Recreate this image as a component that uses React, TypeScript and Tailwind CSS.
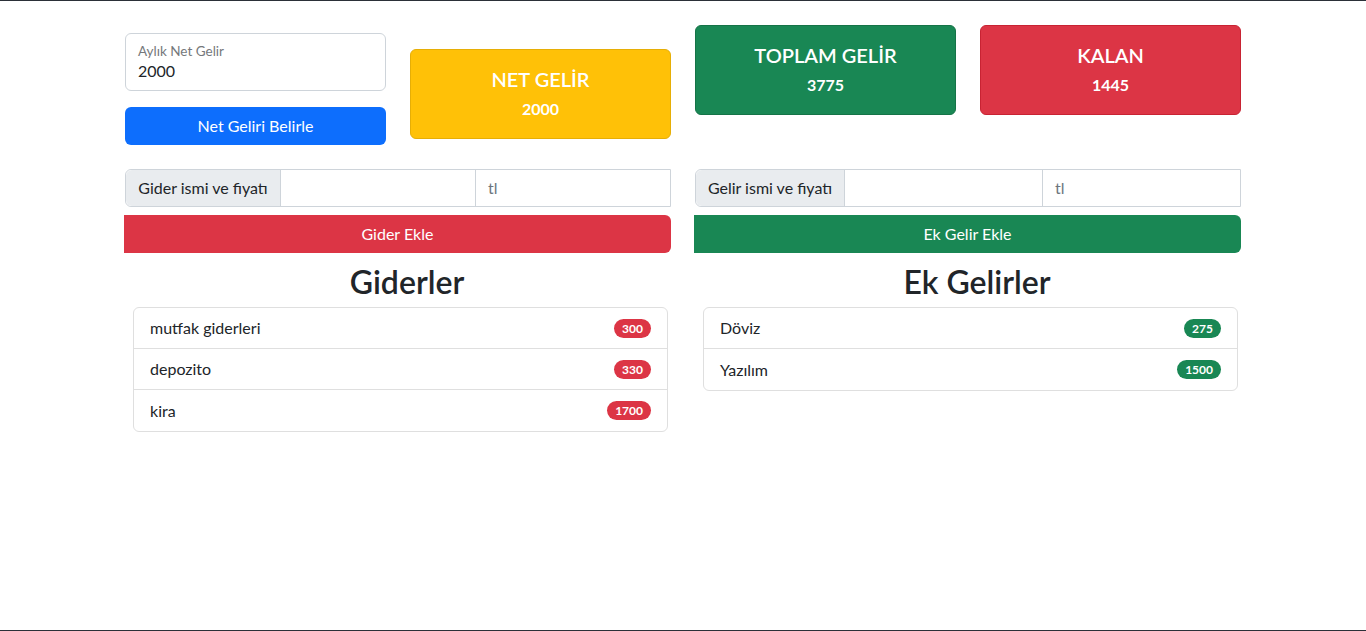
import React from "react";

const font = { fontFamily: '"Segoe UI", Lato, "Noto Sans", sans-serif' };

function Stat({ title, value, color, border }: { title: string; value: string; color: string; border: string }) {
  return (
    <div className={`h-[90px] rounded-md border ${color} ${border} flex flex-col items-center justify-center text-white`}>
      <div className="text-[20px] font-semibold leading-[24px] -mt-[2px]">{title}</div>
      <div className="text-[16px] font-bold leading-[20px] mt-[8px]">{value}</div>
    </div>
  );
}

function ListItem({ name, value, badge, last }: { name: string; value: string; badge: string; last?: boolean }) {
  return (
    <div className={`h-[41px] flex items-center justify-between px-4 ${last ? "" : "border-b border-[#dfdfdf]"}`}>
      <span className="text-[16px] text-[#212529]">{name}</span>
      <span className={`${badge} text-white text-[12px] font-bold rounded-full px-[8px] leading-[19px] h-[19px]`}>{value}</span>
    </div>
  );
}

export default function App() {
  return (
    <div style={font} className="w-[1366px] h-[631px] bg-white border-t border-b border-[#2b3038] text-[#212529] overflow-hidden">
      <div className="w-[1116px] mx-auto">
        {/* Row 1 */}
        <div className="grid grid-cols-4 gap-x-[24px] mt-[24px]">
          <div className="pt-[8px]">
            <div className="h-[58px] rounded-md border border-[#ced4da] px-[12px] pt-[8px]">
              <div className="text-[13.5px] leading-[18px] text-[#75787b]">Aylık Net Gelir</div>
              <div className="text-[16px] leading-[20px] mt-[1px]">2000</div>
            </div>
            <div className="mt-[16px] h-[38px] rounded-md bg-[#0d6efd] text-white text-[16px] flex items-center justify-center">
              Net Geliri Belirle
            </div>
          </div>
          <div className="pt-[24px]">
            <Stat title="NET GELİR" value="2000" color="bg-[#ffc107]" border="border-[#e6ae06]" />
          </div>
          <div>
            <Stat title="TOPLAM GELİR" value="3775" color="bg-[#198754]" border="border-[#157347]" />
          </div>
          <div>
            <Stat title="KALAN" value="1445" color="bg-[#dc3545]" border="border-[#c82333]" />
          </div>
        </div>

        {/* Row 2 */}
        <div className="grid grid-cols-2 gap-x-[24px] mt-[24px]">
          <div>
            <div className="flex h-[38px] border border-[#ced4da] rounded-l-md text-[16px]">
              <div className="w-[155px] bg-[#e9ecef] border-r border-[#ced4da] rounded-l-md flex items-center justify-center">Gider ismi ve fiyatı</div>
              <div className="w-[195px] border-r border-[#ced4da]"></div>
              <div className="flex-1 flex items-center px-[12px] text-[#6c757d]">tl</div>
            </div>
            <div className="-ml-px mt-[8px] h-[38px] bg-[#dc3545] rounded-r-md text-white text-[16px] flex items-center justify-center">Gider Ekle</div>
            <div className="text-center text-[32px] font-semibold leading-[38px] mt-[10px] pl-[18px]">Giderler</div>
            <div className="ml-[8px] mr-[3px] mt-[6px] border border-[#dfdfdf] rounded-md">
              <ListItem name="mutfak giderleri" value="300" badge="bg-[#dc3545]" />
              <ListItem name="depozito" value="330" badge="bg-[#dc3545]" />
              <ListItem name="kira" value="1700" badge="bg-[#dc3545]" last />
            </div>
          </div>
          <div>
            <div className="flex h-[38px] border border-[#ced4da] rounded-l-md text-[16px]">
              <div className="w-[149px] bg-[#e9ecef] border-r border-[#ced4da] rounded-l-md flex items-center justify-center">Gelir ismi ve fiyatı</div>
              <div className="w-[198px] border-r border-[#ced4da]"></div>
              <div className="flex-1 flex items-center px-[12px] text-[#6c757d]">tl</div>
            </div>
            <div className="-ml-px mt-[8px] h-[38px] bg-[#198754] rounded-r-md text-white text-[16px] flex items-center justify-center">Ek Gelir Ekle</div>
            <div className="text-center text-[32px] font-semibold leading-[38px] mt-[10px] pl-[18px]">Ek Gelirler</div>
            <div className="ml-[8px] mr-[3px] mt-[6px] border border-[#dfdfdf] rounded-md">
              <ListItem name="Döviz" value="275" badge="bg-[#198754]" />
              <ListItem name="Yazılım" value="1500" badge="bg-[#198754]" last />
            </div>
          </div>
        </div>
      </div>
    </div>
  );
}
